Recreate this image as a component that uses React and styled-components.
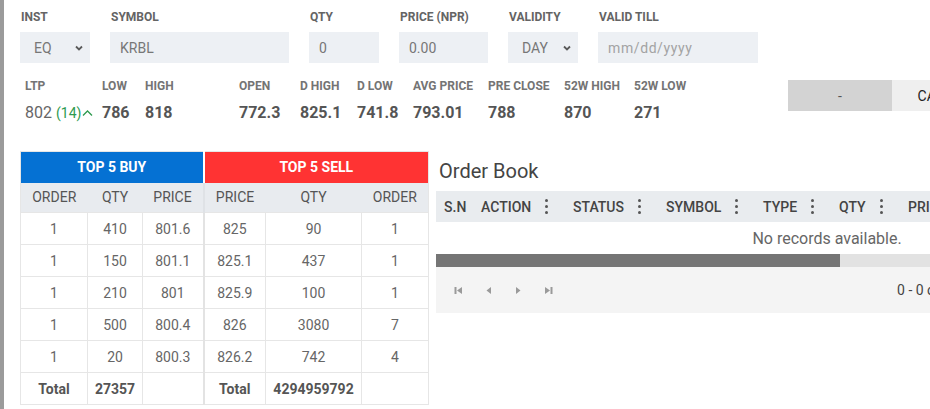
import React from "react";
import styled, { createGlobalStyle } from "styled-components";

const Global = createGlobalStyle`
  html, body { margin: 0; padding: 0; overflow: hidden; background: #fff; }
  body { font-family: Roboto, "Liberation Sans", Arial, sans-serif; }
  * { box-sizing: border-box; }
`;

const Page = styled.div`
  display: flex;
  width: max-content;
  min-height: 100vh;
`;

const SideBar = styled.div`
  width: 4px;
  flex: 0 0 4px;
  background: #9b9b9b;
  min-height: 100vh;
`;

const Main = styled.div`
  padding: 10px 0 0 16px;
`;

const FormRow = styled.div`
  display: flex;
  gap: 20px;
`;

const Field = styled.div`
  display: flex;
  flex-direction: column;
  width: ${(p) => p.$w}px;
`;

const Label = styled.label`
  font-size: 12px;
  font-weight: 700;
  line-height: 14px;
  color: #646464;
  margin-bottom: 8px;
  padding-left: 1px;
  white-space: nowrap;
`;

const TextInput = styled.input`
  width: 100%;
  height: 31px;
  border: none;
  outline: none;
  background: #edf0f4;
  padding: 0 10px;
  font-family: Roboto, "Liberation Sans", Arial, sans-serif;
  font-size: 14px;
  color: #777;
  &::placeholder { color: #a3a3a3; letter-spacing: 0.6px; }
`;

const SelectBox = styled.div`
  height: 31px;
  background: #edf0f4;
  display: flex;
  align-items: center;
  justify-content: space-between;
  padding: 0 7px 0 14px;
  font-size: 14px;
  color: #777;
`;

const Chevron = () => (
  <svg width="8" height="6" viewBox="0 0 8 6">
    <polyline points="1,1.5 4,4.5 7,1.5" fill="none" stroke="#5a5a5a" strokeWidth="1.8" />
  </svg>
);

const InfoRow = styled.div`
  display: flex;
  align-items: flex-start;
  margin-top: 16px;
`;

const Stats = styled.div`
  display: flex;
  padding-left: 5px;
`;

const StatItem = styled.div`
  width: ${(p) => p.$w}px;
  display: flex;
  flex-direction: column;
`;

const StatLabel = styled.div`
  font-size: 12px;
  font-weight: 700;
  line-height: 14px;
  color: #747474;
  white-space: nowrap;
`;

const StatValue = styled.div`
  margin-top: 10px;
  font-size: 16px;
  line-height: 20px;
  font-weight: ${(p) => (p.$light ? 400 : 700)};
  color: ${(p) => (p.$light ? "#666" : "#555")};
  white-space: nowrap;
  display: flex;
  align-items: center;
`;

const Change = styled.span`
  color: #2e9a4f;
  font-size: 14px;
  margin-left: 4px;
  display: inline-flex;
  align-items: center;
`;

const Buttons = styled.div`
  display: flex;
  margin-top: 1px;
`;

const ActionButton = styled.button`
  width: 104px;
  height: 31px;
  border: none;
  background: ${(p) => p.$bg};
  color: ${(p) => p.$color};
  font-family: Roboto, "Liberation Sans", Arial, sans-serif;
  font-size: 14px;
  padding: 0;
`;

const Bottom = styled.div`
  display: flex;
  align-items: flex-start;
  gap: 7px;
  margin-top: 28px;
`;

const DepthTable = styled.table`
  width: 408px;
  table-layout: fixed;
  border-collapse: collapse;
  font-size: 14px;
  border: 1px solid #e6e6e6;
`;

const TitleCell = styled.th`
  height: 31px;
  background: ${(p) => p.$bg};
  color: #fff;
  font-weight: 700;
  font-size: 14px;
  text-align: center;
  padding: 0;
  border-right: ${(p) => (p.$split ? "2px solid #fff" : "none")};
`;

const ColHead = styled.th`
  height: 30px;
  background: #e8ebef;
  color: #555;
  font-weight: 400;
  text-align: center;
  padding: 0;
  border-left: ${(p) => (p.$split ? "2px solid #dfe2e6" : "none")};
`;

const Cell = styled.td`
  height: 32px;
  text-align: center;
  color: ${(p) => (p.$bold ? "#555" : "#666")};
  font-weight: ${(p) => (p.$bold ? 700 : 400)};
  padding: 0;
  border: 1px solid #e6e6e6;
  border-left: ${(p) => (p.$split ? "2px solid #e3e3e3" : "1px solid #e6e6e6")};
`;

const OrderBook = styled.div`
  width: 782px;
`;

const Title = styled.div`
  height: 40px;
  line-height: 40px;
  font-size: 20px;
  color: #444;
  padding-left: 3px;
`;

const GridHeader = styled.div`
  display: flex;
  height: 31px;
  background: #e9ecef;
`;

const HeadCell = styled.div`
  width: ${(p) => (p.$w ? `${p.$w}px` : "auto")};
  flex: ${(p) => (p.$w ? "none" : "1")};
  display: flex;
  align-items: center;
  justify-content: space-between;
  padding: 0 13px 0 ${(p) => p.$pl}px;
  font-size: 14px;
  font-weight: 500;
  color: #444;
  white-space: nowrap;
`;

const MenuDots = styled.span`
  display: flex;
  flex-direction: column;
  gap: 3px;
  & > i {
    display: block;
    width: 3px;
    height: 3px;
    border-radius: 50%;
    background: #555;
  }
`;

const EmptyRow = styled.div`
  height: 32px;
  display: flex;
  align-items: center;
  justify-content: center;
  font-size: 16px;
  color: #666;
  background: #fff;
`;

const ScrollTrack = styled.div`
  height: 13px;
  background: #e2e2e2;
`;

const ScrollThumb = styled.div`
  height: 100%;
  width: 404px;
  background: #757575;
`;

const Pager = styled.div`
  height: 46px;
  background: #f4f4f4;
  display: flex;
  align-items: center;
  padding-left: 7px;
`;

const PagerNav = styled.div`
  display: flex;
`;

const PagerBtn = styled.span`
  width: 30px;
  display: flex;
  justify-content: center;
  align-items: center;
`;

const PagerInfo = styled.span`
  margin-left: 334px;
  font-size: 14px;
  color: #444;
`;

const Dots = () => (
  <MenuDots>
    <i />
    <i />
    <i />
  </MenuDots>
);

const Icon = ({ kind }) => {
  const c = "#9a9a9a";
  if (kind === "first")
    return (
      <svg width="9" height="9" viewBox="0 0 9 9">
        <rect x="0.5" y="1" width="2" height="7" fill={c} />
        <polygon points="8,1 8,8 3,4.5" fill={c} />
      </svg>
    );
  if (kind === "prev")
    return (
      <svg width="7" height="9" viewBox="0 0 7 9">
        <polygon points="6,1 6,8 1.5,4.5" fill={c} />
      </svg>
    );
  if (kind === "next")
    return (
      <svg width="7" height="9" viewBox="0 0 7 9">
        <polygon points="1,1 1,8 5.5,4.5" fill={c} />
      </svg>
    );
  return (
    <svg width="9" height="9" viewBox="0 0 9 9">
      <polygon points="1,1 1,8 6,4.5" fill={c} />
      <rect x="6.5" y="1" width="2" height="7" fill={c} />
    </svg>
  );
};

const stats = [
  ["LOW", "786", 43],
  ["HIGH", "818", 94],
  ["OPEN", "772.3", 61],
  ["D HIGH", "825.1", 57],
  ["D LOW", "741.8", 56],
  ["AVG PRICE", "793.01", 75],
  ["PRE CLOSE", "788", 76],
  ["52W HIGH", "870", 70],
  ["52W LOW", "271", 154],
];

const buy = [
  [1, 410, "801.6"],
  [1, 150, "801.1"],
  [1, 210, "801"],
  [1, 500, "800.4"],
  [1, 20, "800.3"],
];
const sell = [
  ["825", 90, 1],
  ["825.1", 437, 1],
  ["825.9", 100, 1],
  ["826", 3080, 7],
  ["826.2", 742, 4],
];

const cols = [
  ["ACTION", 92],
  ["STATUS", 93],
  ["SYMBOL", 97],
  ["TYPE", 76],
  ["QTY", 69],
];

export default function App() {
  return (
    <>
      <Global />
      <Page>
        <SideBar />
        <Main>
          <FormRow>
            <Field $w={70}>
              <Label>INST</Label>
              <SelectBox>
                EQ <Chevron />
              </SelectBox>
            </Field>
            <Field $w={179}>
              <Label>SYMBOL</Label>
              <TextInput defaultValue="KRBL" />
            </Field>
            <Field $w={70}>
              <Label>QTY</Label>
              <TextInput defaultValue="0" />
            </Field>
            <Field $w={89}>
              <Label>PRICE (NPR)</Label>
              <TextInput defaultValue="0.00" />
            </Field>
            <Field $w={70}>
              <Label>VALIDITY</Label>
              <SelectBox>
                DAY <Chevron />
              </SelectBox>
            </Field>
            <Field $w={160}>
              <Label>VALID TILL</Label>
              <TextInput placeholder="mm/dd/yyyy" />
            </Field>
          </FormRow>

          <InfoRow>
            <Stats>
              <StatItem $w={77}>
                <StatLabel>LTP</StatLabel>
                <StatValue $light>
                  802
                  <Change>
                    (14)
                    <svg width="11" height="8" viewBox="0 0 11 8" style={{ marginLeft: 1 }}>
                      <polyline points="1,6.5 5.5,2 10,6.5" fill="none" stroke="#2e9a4f" strokeWidth="1.3" />
                    </svg>
                  </Change>
                </StatValue>
              </StatItem>
              {stats.map(([l, v, w]) => (
                <StatItem key={l} $w={w}>
                  <StatLabel>{l}</StatLabel>
                  <StatValue>{v}</StatValue>
                </StatItem>
              ))}
            </Stats>
            <Buttons>
              <ActionButton $bg="#d3d3d3" $color="#555">-</ActionButton>
              <ActionButton $bg="#efefef" $color="#222">CANCEL</ActionButton>
            </Buttons>
          </InfoRow>

          <Bottom>
            <DepthTable>
              <colgroup>
                <col style={{ width: 67 }} />
                <col style={{ width: 55 }} />
                <col style={{ width: 61 }} />
                <col style={{ width: 62 }} />
                <col style={{ width: 96 }} />
                <col style={{ width: 67 }} />
              </colgroup>
              <thead>
                <tr>
                  <TitleCell colSpan={3} $bg="#0571d3" $split>
                    TOP 5 BUY
                  </TitleCell>
                  <TitleCell colSpan={3} $bg="#ff3333">
                    TOP 5 SELL
                  </TitleCell>
                </tr>
                <tr>
                  <ColHead>ORDER</ColHead>
                  <ColHead>QTY</ColHead>
                  <ColHead>PRICE</ColHead>
                  <ColHead $split>PRICE</ColHead>
                  <ColHead>QTY</ColHead>
                  <ColHead>ORDER</ColHead>
                </tr>
              </thead>
              <tbody>
                {buy.map((b, i) => (
                  <tr key={i}>
                    <Cell>{b[0]}</Cell>
                    <Cell>{b[1]}</Cell>
                    <Cell>{b[2]}</Cell>
                    <Cell $split>{sell[i][0]}</Cell>
                    <Cell>{sell[i][1]}</Cell>
                    <Cell>{sell[i][2]}</Cell>
                  </tr>
                ))}
                <tr>
                  <Cell $bold>Total</Cell>
                  <Cell $bold>27357</Cell>
                  <Cell />
                  <Cell $bold $split>Total</Cell>
                  <Cell $bold>4294959792</Cell>
                  <Cell />
                </tr>
              </tbody>
            </DepthTable>

            <OrderBook>
              <Title>Order Book</Title>
              <GridHeader>
                <HeadCell $w={33} $pl={8}>S.N</HeadCell>
                {cols.map(([n, w]) => (
                  <HeadCell key={n} $w={w} $pl={12}>
                    {n}
                    <Dots />
                  </HeadCell>
                ))}
                <HeadCell $pl={12}>PRICE</HeadCell>
              </GridHeader>
              <EmptyRow>No records available.</EmptyRow>
              <ScrollTrack>
                <ScrollThumb />
              </ScrollTrack>
              <Pager>
                <PagerNav>
                  <PagerBtn><Icon kind="first" /></PagerBtn>
                  <PagerBtn><Icon kind="prev" /></PagerBtn>
                  <PagerBtn><Icon kind="next" /></PagerBtn>
                  <PagerBtn><Icon kind="last" /></PagerBtn>
                </PagerNav>
                <PagerInfo>0 - 0 of 0 items</PagerInfo>
              </Pager>
            </OrderBook>
          </Bottom>
        </Main>
      </Page>
    </>
  );
}
